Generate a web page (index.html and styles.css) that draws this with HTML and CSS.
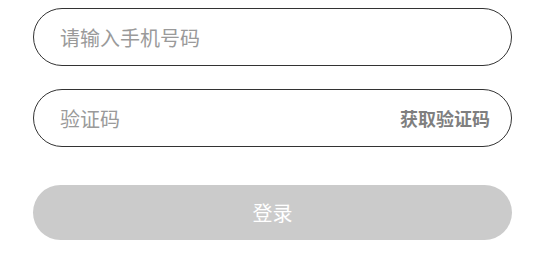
FILE: index.html
```html
<!DOCTYPE html>
<html lang="zh">
<head>
<meta charset="utf-8">
<title>登录</title>
<link rel="stylesheet" href="styles.css">
</head>
<body>
<form class="login">
  <label class="field">
    <input class="field-input" type="tel" placeholder="请输入手机号码">
  </label>
  <label class="field">
    <input class="field-input" type="text" placeholder="验证码">
    <span class="code-btn">获取验证码</span>
  </label>
  <button class="submit" type="button">登录</button>
</form>
</body>
</html>
```
FILE: styles.css
```css
html, body {
  margin: 0;
  padding: 0;
  background: #ffffff;
}
body {
  font-family: "Noto Sans CJK SC", "Noto Sans", sans-serif;
}
.login {
  display: flex;
  flex-direction: column;
  gap: 23px;
  padding: 8px 29px 0 33px;
}
.field {
  box-sizing: border-box;
  height: 58px;
  border: 1px solid #333333;
  border-radius: 29px;
  display: flex;
  align-items: center;
  padding: 0 21px 0 26px;
}
.field-input {
  flex: 1;
  min-width: 0;
  border: none;
  outline: none;
  background: transparent;
  padding: 0;
  font-family: inherit;
  font-size: 20px;
  color: #333333;
}
.field-input::placeholder {
  color: #9a9a9a;
}
.code-btn {
  font-size: 18px;
  font-weight: 700;
  color: #7f7f7f;
  white-space: nowrap;
}
.submit {
  margin-top: 15px;
  height: 55px;
  border: none;
  border-radius: 28px;
  background: #cbcbcb;
  color: #ffffff;
  font-family: inherit;
  font-size: 20px;
  padding: 0;
}
```
